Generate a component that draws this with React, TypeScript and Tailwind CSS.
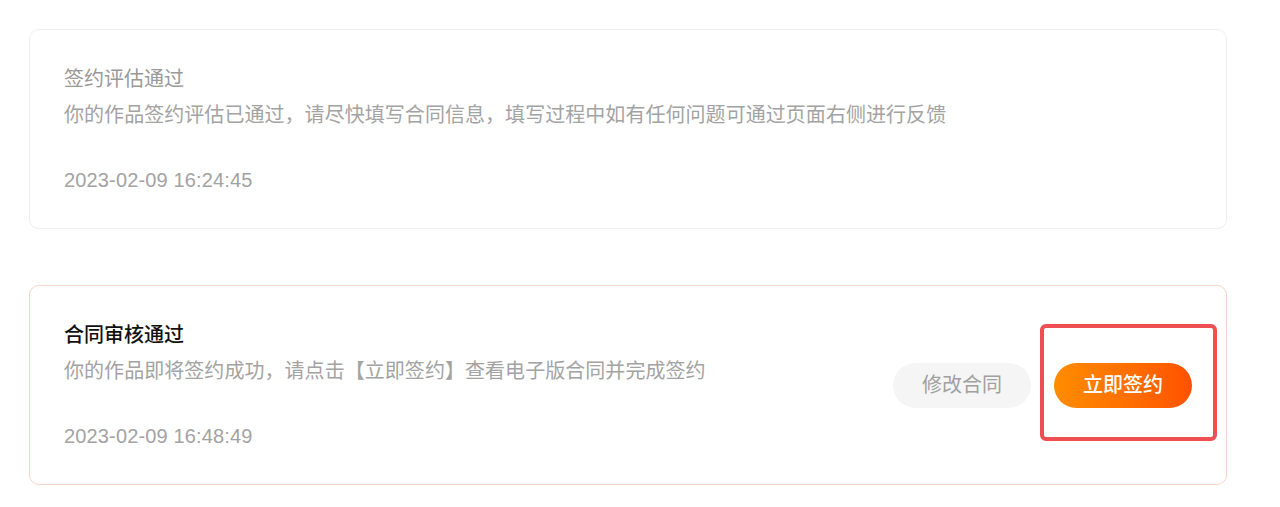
const font = {
  fontFamily:
    '"Liberation Sans", "Noto Sans CJK SC", "Noto Sans", sans-serif',
};

type Notice = {
  id: number;
  title: string;
  desc: string;
  time: string;
  active?: boolean;
};

const notices: Notice[] = [
  {
    id: 1,
    title: "签约评估通过",
    desc: "你的作品签约评估已通过，请尽快填写合同信息，填写过程中如有任何问题可通过页面右侧进行反馈",
    time: "2023-02-09 16:24:45",
  },
  {
    id: 2,
    title: "合同审核通过",
    desc: "你的作品即将签约成功，请点击【立即签约】查看电子版合同并完成签约",
    time: "2023-02-09 16:48:49",
    active: true,
  },
];

const NoticeCard = ({ notice }: { notice: Notice }) => {
  const { title, desc, time, active } = notice;

  return (
    <div
      className={
        active
          ? "relative flex h-[200px] items-center justify-between rounded-[10px] border border-[#f5d6c8] bg-white pl-[34px] pr-[34px]"
          : "relative flex h-[200px] items-center justify-between rounded-[10px] border border-[#eeeeee] bg-white pl-[34px] pr-[34px]"
      }
    >
      <div className="flex flex-col self-start pt-[35px]">
        <div
          className={
            active
              ? "text-[20px] leading-[28px] font-medium text-[#111111]"
              : "text-[20px] leading-[28px] text-[#999999]"
          }
        >
          {title}
        </div>
        <div className="mt-[8px] text-[20px] leading-[28px] tracking-[0.05px] text-[#a3a3a3]">
          {desc}
        </div>
        <div className="mt-[37px] text-[20px] leading-[28px] tracking-[0.15px] text-[#a3a3a3]">
          {time}
        </div>
      </div>

      {active && (
        <div className="flex items-center gap-[23px]">
          <button className="flex h-[45px] w-[138px] items-center justify-center rounded-full bg-[#f5f5f5] text-[20px] text-[#a0a0a0]">
            修改合同
          </button>
          <button className="flex h-[45px] w-[138px] items-center justify-center rounded-full bg-gradient-to-r from-[#ff8c00] to-[#ff5100] text-[20px] font-medium text-white">
            立即签约
          </button>
        </div>
      )}

      {/* annotation box around the primary action */}
      {active && (
        <div className="pointer-events-none absolute left-[1010px] top-[38px] h-[117px] w-[177px] rounded-[6px] border-[4px] border-[#ef4f52]" />
      )}
    </div>
  );
};

export default function App() {
  return (
    <div className="min-h-[507px] w-full bg-white" style={font}>
      <div className="flex w-[1198px] flex-col gap-[56px] pl-[29px] pt-[29px] box-content">
        {notices.map((n) => (
          <NoticeCard key={n.id} notice={n} />
        ))}
      </div>
    </div>
  );
}
